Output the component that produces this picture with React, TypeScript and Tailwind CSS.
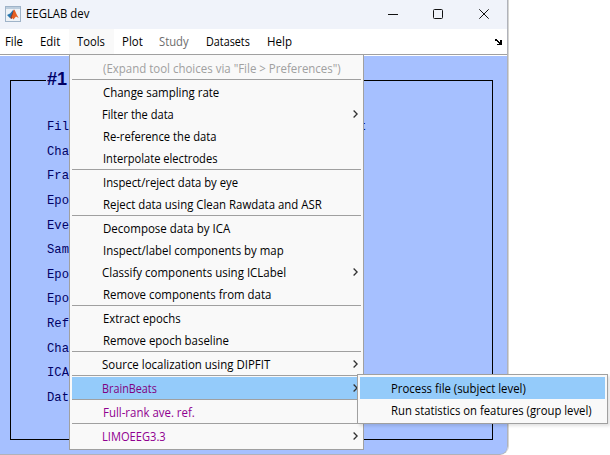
import { useLayoutEffect, useRef, useState } from "react";

// Text drawn with a condensed advance so that it occupies a given width.
function Label({ text, width, className = "" }: { text: string; width: number; className?: string }) {
  const ref = useRef<HTMLSpanElement>(null);
  const [scale, setScale] = useState(1);
  useLayoutEffect(() => {
    if (ref.current) setScale(width / ref.current.offsetWidth);
  }, [text, width]);
  return (
    <span
      ref={ref}
      className={`inline-block shrink-0 origin-left whitespace-nowrap ${className}`}
      style={{ transform: `scaleX(${scale})` }}
    >
      {text}
    </span>
  );
}

type Item = { text: string; width: number; arrow?: boolean; tone?: string; active?: boolean };

const groups: Item[][] = [
  [{ text: '(Expand tool choices via "File > Preferences")', width: 238, tone: "text-[#a0a0a0]" }],
  [
    { text: "Change sampling rate", width: 116.5 },
    { text: "Filter the data", width: 72, arrow: true },
    { text: "Re-reference the data", width: 113 },
    { text: "Interpolate electrodes", width: 114 },
  ],
  [
    { text: "Inspect/reject data by eye", width: 135.5 },
    { text: "Reject data using Clean Rawdata and ASR", width: 218.5 },
  ],
  [
    { text: "Decompose data by ICA", width: 127.5 },
    { text: "Inspect/label components by map", width: 181 },
    { text: "Classify components using ICLabel", width: 184, arrow: true },
    { text: "Remove components from data", width: 168.5 },
  ],
  [
    { text: "Extract epochs", width: 77.5 },
    { text: "Remove epoch baseline", width: 125.5 },
  ],
  [{ text: "Source localization using DIPFIT", width: 168, arrow: true }],
  [{ text: "BrainBeats", width: 55, arrow: true, tone: "text-[#800080]", active: true }],
  [{ text: "Full-rank ave. ref.", width: 91.5, tone: "text-[#900090]" }],
  [{ text: "LIMOEEG3.3", width: 64, arrow: true, tone: "text-[#900090]" }],
];

const menus = [
  { text: "File", width: 18, box: "w-[38px] pl-[5px]" },
  { text: "Edit", width: 20, box: "w-[31px] pl-[2px]" },
  { text: "Tools", width: 28, box: "w-[45px] pl-[8px] bg-[#f9f9f9]" },
  { text: "Plot", width: 21, box: "w-[36px] pl-[8px]" },
  { text: "Study", width: 30, box: "w-[48px] pl-[9px] text-[#6d6d6d]" },
  { text: "Datasets", width: 44, box: "w-[61px] pl-[8px]" },
  { text: "Help", width: 25, box: "w-[45px] pl-[8px]" },
];

const fields = ["Fil", "Cha", "Fra", "Epo", "Eve", "Sam", "Epo", "Epo", "Ref", "Cha", "ICA", "Dat"];

function Arrow() {
  return (
    <svg className="ml-auto mr-[3px] shrink-0" width="5" height="8" viewBox="0 0 5 8" fill="none" stroke="#333" strokeWidth="1.3">
      <path d="M0.6 0.5 4.1 4 0.6 7.5" />
    </svg>
  );
}

export default function App() {
  return (
    <div className="relative h-[455px] w-[610px] overflow-hidden bg-white font-['Open_Sans','Noto_Sans',sans-serif] text-[12px] leading-[22px] text-black">
      <div className="h-[455px] w-[509px] overflow-hidden rounded-br-[9px] border-r border-[#d6d6d3]">
        <div className="flex h-[455px] w-[508px] flex-col overflow-hidden rounded-br-[8px] border-b border-r border-[#b0b2ba] bg-[#a6c0ff]">
          <header className="flex h-[29px] shrink-0 items-center bg-[#f0f3fa] pb-px pl-[5px]">
            <svg className="mb-px shrink-0" width="16" height="16" viewBox="0 0 16 16">
              <rect x="0.5" y="0.5" width="15" height="15" fill="#eef2f6" stroke="#9fb3c8" />
              <path d="M1 1h14v2H1z" fill="#bccddd" />
              <path d="m2 9 3-1.5L8 4v6l-3 2z" fill="#2775ad" />
              <path d="M5 12c1-1 2-5 4-8.5L10 6l-1 4-2.5 3z" fill="#87352b" />
              <path d="M9 3.5c1.6 1.5 2.8 6 4.7 8.5L11 10.5 8.4 13.5 6.5 11C8 9 8 6 9 3.5z" fill="#e45f22" />
            </svg>
            <Label text="EEGLAB dev" width={63.5} className="ml-[5px]" />
            <svg className="mb-px ml-auto mr-[17px]" width="102" height="12" viewBox="0 0 102 12" fill="none" stroke="#111">
              <path d="M0 6.5h10" />
              <rect x="45.5" y="1.5" width="9" height="9" rx="1" />
              <path d="m91.3 1.3 9.4 9.4m0-9.4-9.4 9.4" />
            </svg>
          </header>
          <nav className="flex h-[25px] shrink-0 items-center bg-white">
            {menus.map((m) => (
              <div key={m.text} className={`h-[25px] shrink-0 pt-[2px] ${m.box}`}>
                <Label text={m.text} width={m.width} />
              </div>
            ))}
            <svg className="ml-auto mr-[5px]" width="7" height="6" viewBox="0 0 7 6">
              <path d="M0 0h2v1h1v1h1v1h1V1h2v5H2V5h2V4H3V3H2V2H0z" fill="#000" />
            </svg>
          </nav>
          <div className="h-[2px] shrink-0 border-t border-[#a0a0a0] bg-white" />
          <main className="flex h-[398px] shrink-0 pl-[10px] pt-[24px]">
            <section className="h-[360px] w-[483px] border border-black pl-[35px]">
              <h1 className="-mt-[14px] h-[24px] w-[317px] bg-[#a6c0ff] pl-px font-['Liberation_Sans',sans-serif] text-[18px] font-bold leading-[24px] text-[#000066]">
                #1
              </h1>
              <div className="mt-[24px] font-['Liberation_Mono',monospace] text-[12.2px] text-[#000066]">
                {fields.map((f, i) => (
                  <div key={i} className="flex h-[24.6px] items-center whitespace-pre pl-px">
                    <span className="w-[312px]">{f}</span>
                    {i === 0 && "t"}
                  </div>
                ))}
              </div>
            </section>
          </main>
        </div>
      </div>

      <div className="absolute left-[69px] top-[54px] h-[396px] w-[295px] border border-[#a0a0a0] bg-[#f9f9f9] p-[2px]">
        {groups.map((group, g) => (
          <div key={g} className={g ? "border-t border-[#a0a0a0] pt-px" : ""}>
            {group.map((item) => (
              <div
                key={item.text}
                className={`flex h-[22px] items-center ${item.arrow ? "pl-[30px]" : "pl-[31px]"} ${item.tone ?? ""} ${item.active ? "bg-[#94cbfa]" : ""}`}
              >
                <Label text={item.text} width={item.width} className="pt-[2px]" />
                {item.arrow && <Arrow />}
              </div>
            ))}
          </div>
        ))}
      </div>

      <div className="absolute left-[357px] top-[374px] h-[50px] w-[251px] border border-[#a0a0a0] bg-[#f9f9f9] p-[2px] shadow-[2px_2px_3px_rgba(0,0,0,0.12)]">
        <div className="flex h-[22px] items-center bg-[#94cbfa] pl-[31px]">
          <Label text="Process file (subject level)" width={134.5} className="pt-[2px]" />
        </div>
        <div className="flex h-[22px] items-center pl-[31px]">
          <Label text="Run statistics on features (group level)" width={200.5} className="pt-[2px]" />
        </div>
      </div>
    </div>
  );
}
